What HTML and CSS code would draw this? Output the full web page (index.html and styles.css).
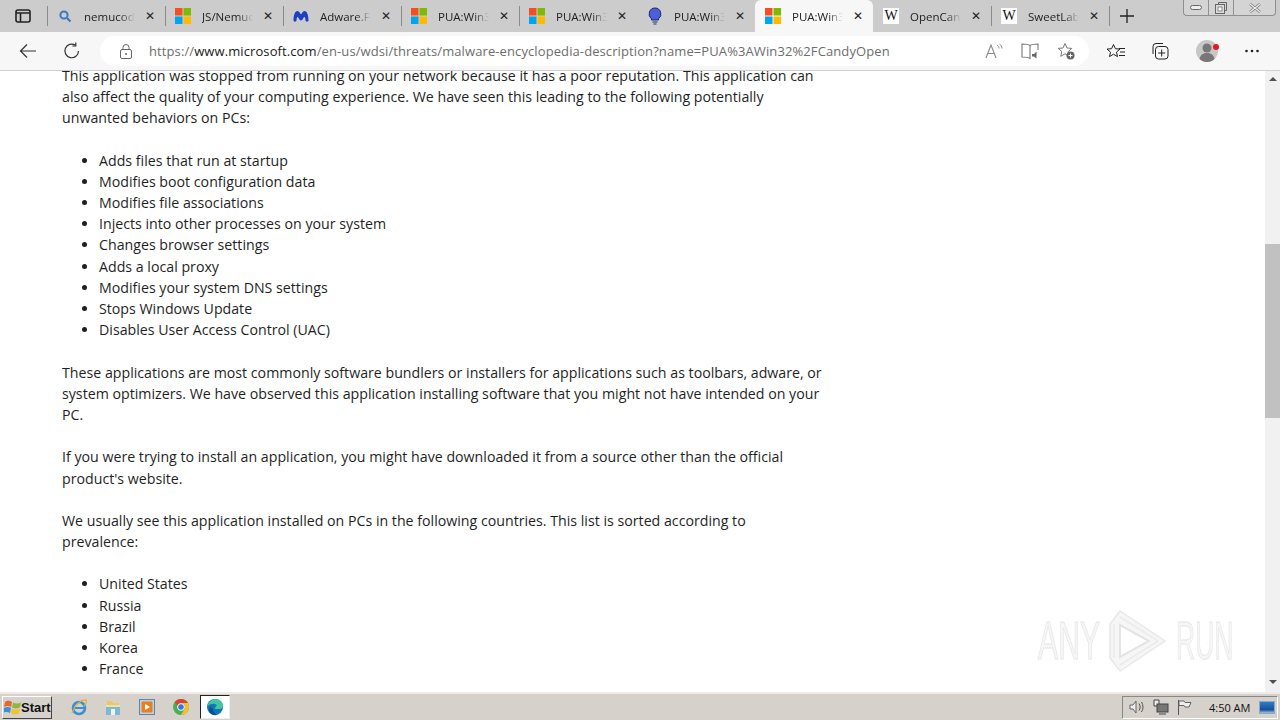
FILE: index.html
```html
<!DOCTYPE html>
<html lang="en">
<head>
    <meta charset="UTF-8">
    <title>PUA:Win32/CandyOpen</title>
    <link rel="stylesheet" href="styles.css">
</head>
<body>
    <div class="tabbar">
        <div class="tab-actions">
            <svg width="16" height="14" viewBox="0 0 16 14"><rect x="1" y="1" width="14" height="12" rx="2" fill="none" stroke="#222" stroke-width="1.6"/><path d="M1 4h14M5.5 4v9" stroke="#222" stroke-width="1.6" fill="none"/></svg>
        </div>
        <div class="tab sep">
            <svg class="fav" width="16" height="16" viewBox="0 0 16 16"><circle cx="7" cy="7" r="3.6" fill="none" stroke="#3a78c4" stroke-width="2"/><path d="M10 10l3.5 3.5" stroke="#3a78c4" stroke-width="2.2"/></svg>
            <span class="tab-title">nemucod</span><span class="tab-x">&#x2715;</span>
        </div>
        <div class="tab sep">
            <svg class="fav" width="16" height="16" viewBox="0 0 16 16"><rect width="7.5" height="7.5" fill="#f25022"/><rect x="8.5" width="7.5" height="7.5" fill="#7fba00"/><rect y="8.5" width="7.5" height="7.5" fill="#00a4ef"/><rect x="8.5" y="8.5" width="7.5" height="7.5" fill="#ffb900"/></svg>
            <span class="tab-title">JS/Nemucod</span><span class="tab-x">&#x2715;</span>
        </div>
        <div class="tab sep">
            <svg class="fav" width="16" height="16" viewBox="0 0 16 16"><path d="M.5 12.500C.5 7 2 3 4.500 3 6.500 3 7 5.500 8 6.500 9 5.500 9.500 3 11.500 3 14 3 15.500 7 15.500 12.500 15.500 14 12.500 14 12.500 12.500 12.500 10.500 12 9 11.300 9 10.500 9 10 12 8 12.500 6 12 5.500 9 4.700 9 4 9 3.500 10.500 3.500 12.500 3.500 14 .5 14 .5 12.500Z" fill="#1c3fc4"/></svg>
            <span class="tab-title">Adware.Full</span><span class="tab-x">&#x2715;</span>
        </div>
        <div class="tab sep">
            <svg class="fav" width="16" height="16" viewBox="0 0 16 16"><rect width="7.5" height="7.5" fill="#f25022"/><rect x="8.5" width="7.5" height="7.500" fill="#7fba00"/><rect y="8.5" width="7.5" height="7.5" fill="#00a4ef"/><rect x="8.5" y="8.5" width="7.5" height="7.5" fill="#ffb900"/></svg>
            <span class="tab-title">PUA:Win32</span><span class="tab-x">&#x2715;</span>
        </div>
        <div class="tab sep">
            <svg class="fav" width="16" height="16" viewBox="0 0 16 16"><rect width="7.5" height="7.5" fill="#f25022"/><rect x="8.5" width="7.5" height="7.5" fill="#7fba00"/><rect y="8.5" width="7.5" height="7.5" fill="#00a4ef"/><rect x="8.5" y="8.5" width="7.5" height="7.5" fill="#ffb900"/></svg>
            <span class="tab-title">PUA:Win32</span><span class="tab-x">&#x2715;</span>
        </div>
        <div class="tab">
            <svg class="fav" width="16" height="18" viewBox="0 0 16 18"><path d="M8 1a6 6 0 0 0-3.500 10.800V13h7v-1.200A6 6 0 0 0 8 1Z" fill="#4a5fd8" stroke="#1f2a6e"/><path d="M5.500 15h5M6.500 17h3" stroke="#1f2a6e" stroke-width="1.200"/></svg>
            <span class="tab-title">PUA:Win32</span><span class="tab-x">&#x2715;</span>
        </div>
        <div class="tab active">
            <svg class="fav" width="16" height="16" viewBox="0 0 16 16"><rect width="7.5" height="7.5" fill="#f25022"/><rect x="8.5" width="7.5" height="7.5" fill="#7fba00"/><rect y="8.5" width="7.5" height="7.5" fill="#00a4ef"/><rect x="8.5" y="8.5" width="7.5" height="7.5" fill="#ffb900"/></svg>
            <span class="tab-title">PUA:Win32</span><span class="tab-x">&#x2715;</span>
        </div>
        <div class="tab">
            <span class="fav wiki">W</span>
            <span class="tab-title">OpenCandy</span><span class="tab-x">&#x2715;</span>
        </div>
        <div class="tab sep">
            <span class="fav wiki">W</span>
            <span class="tab-title">SweetLabs</span><span class="tab-x">&#x2715;</span>
        </div>
        <div class="new-tab">
            <svg width="14" height="14" viewBox="0 0 14 14"><path d="M7 0v14M0 7h14" stroke="#222" stroke-width="1.300"/></svg>
        </div>
        <div class="win-buttons">
            <div class="win-btn min"><svg width="12" height="6" viewBox="0 0 12 6"><rect x="0.500" y="0.500" width="11" height="4" rx="2" fill="#eee" stroke="#666"/></svg></div>
            <div class="win-btn restore"><svg width="12" height="12" viewBox="0 0 12 12"><path d="M3.500 2.500v-2h8v8h-2" fill="none" stroke="#666"/><rect x="0.500" y="2.500" width="9" height="9" fill="#ddd" stroke="#666"/><rect x="3" y="5" width="4" height="4" fill="#fff" stroke="#888"/></svg></div>
            <div class="win-btn close"><svg width="14" height="10" viewBox="0 0 14 10"><path d="M2 1l10 8M12 1l-10 8" stroke="#777" stroke-width="2.600"/><path d="M2 1l10 8M12 1l-10 8" stroke="#eee" stroke-width="1.200"/></svg></div>
        </div>
    </div>

    <div class="toolbar">
        <svg class="back" width="18" height="16" viewBox="0 0 18 16"><path d="M17 8H1.500M8 1.500 1.500 8 8 14.500" fill="none" stroke="#333" stroke-width="1.200"/></svg>
        <svg class="reload" width="18" height="18" viewBox="0 0 18 18"><path d="M15.500 9A6.800 6.800 0 1 1 12.500 3.300" fill="none" stroke="#333" stroke-width="1.200"/><path d="M12.800 0.500v3.500h-3.500" fill="none" stroke="#333" stroke-width="1.200"/></svg>
        <div class="address">
            <svg class="lock" width="12" height="15" viewBox="0 0 12 15"><rect x="0.500" y="5.500" width="11" height="9" rx="1.500" fill="none" stroke="#666"/><path d="M3 5.500V3.500a3 3 0 0 1 6 0v2" fill="none" stroke="#666"/><circle cx="6" cy="10" r="1" fill="#666"/></svg>
            <span class="url">https://<b>www.microsoft.com</b>/en-us/wdsi/threats/malware-encyclopedia-description?name=PUA%3AWin32%2FCandyOpen</span>
            <svg class="addr-icon read" width="18" height="16" viewBox="0 0 18 16"><path d="M1 15 6 2l5 13M3 10.500h6" fill="none" stroke="#8a8a8a" stroke-width="1.100"/><path d="M12 2c1.500 1 2 2 2 3.500M14.500 1c1.500 1.200 2.500 2.500 2.500 4.500" fill="none" stroke="#8a8a8a"/></svg>
            <svg class="addr-icon book" width="19" height="17" viewBox="0 0 19 17"><path d="M9 2.500C7 1 4 1 1 1v13c3 0 6 0 8 1.500V2.500ZM9 2.500C11 1 14 1 17 1v6" fill="none" stroke="#777" stroke-width="1.100"/><path d="M11 11h2l2.500-2.500v7L13 13.500h-2Z" fill="#666"/></svg>
            <svg class="addr-icon fav-add" width="18" height="18" viewBox="0 0 18 18"><path d="M8 1.500l2 4.500 4.800.4-3.600 3.200 1 4.700L8 11.800l-4.200 2.500 1-4.700L1.200 6.400 6 6Z" fill="none" stroke="#777"/><circle cx="13.500" cy="13.500" r="4" fill="#666"/><path d="M13.500 11.500v4M11.500 13.500h4" stroke="#fff"/></svg>
        </div>
        <div class="tools">
            <svg width="20" height="17" viewBox="0 0 20 17"><path d="M7.500 1.500l1.900 4.200 4.600.4-3.500 3 1 4.500-4-2.400-4 2.400 1-4.500-3.500-3 4.600-.4Z" fill="none" stroke="#222"/><path d="M13 5.500h6M14 9h5M13 12.500h6" stroke="#222"/></svg>
            <svg width="18" height="18" viewBox="0 0 18 18"><path d="M2 12V4.500A3 3 0 0 1 5 1.500h7" fill="none" stroke="#222"/><rect x="4.500" y="4.500" width="12.500" height="12.500" rx="3" fill="none" stroke="#222"/><path d="M10.700 7.500v7M7.200 11h7" stroke="#222"/></svg>
            <svg class="avatar" width="24" height="24" viewBox="0 0 24 24"><circle cx="11" cy="12" r="11" fill="#c9c7c5"/><circle cx="11" cy="9" r="4.500" fill="#777"/><path d="M3.500 20c1-4.500 4-6 7.500-6s6.500 1.500 7.500 6c-2 2-4.500 3-7.500 3s-5.500-1-7.500-3Z" fill="#777"/><circle cx="20" cy="8" r="3" fill="#e01b24"/></svg>
            <svg class="more" width="16" height="4" viewBox="0 0 16 4"><circle cx="2.500" cy="2" r="1.300" fill="#222"/><circle cx="8" cy="2" r="1.300" fill="#222"/><circle cx="13.500" cy="2" r="1.300" fill="#222"/></svg>
        </div>
    </div>

    <div class="viewport">
        <div class="page">
            <p>This application was stopped from running on your network because it has a poor reputation. This application can also affect the quality of your computing experience. We have seen this leading to the following potentially unwanted behaviors on PCs:</p>
            <ul>
                <li>Adds files that run at startup</li>
                <li>Modifies boot configuration data</li>
                <li>Modifies file associations</li>
                <li>Injects into other processes on your system</li>
                <li>Changes browser settings</li>
                <li>Adds a local proxy</li>
                <li>Modifies your system DNS settings</li>
                <li>Stops Windows Update</li>
                <li>Disables User Access Control (UAC)</li>
            </ul>
            <p>These applications are most commonly software bundlers or installers for applications such as toolbars, adware, or system optimizers. We have observed this application installing software that you might not have intended on your PC.</p>
            <p>If you were trying to install an application, you might have downloaded it from a source other than the official product's website.</p>
            <p>We usually see this application installed on PCs in the following countries. This list is sorted according to prevalence:</p>
            <ul>
                <li>United States</li>
                <li>Russia</li>
                <li>Brazil</li>
                <li>Korea</li>
                <li>France</li>
            </ul>
        </div>
        <div class="scrollbar">
            <div class="arrow up"></div>
            <div class="track"><div class="thumb"></div></div>
            <div class="arrow down"></div>
        </div>
        <div class="watermark">
            <span class="wm-any">ANY</span>
            <svg width="58" height="62" viewBox="0 0 58 62"><path d="M2 14 12 1 57 31 12 61 2 48Z" fill="#f6f6f6" stroke="#e8e8e8" stroke-width="1.500"/><path d="M12 15 41 31 12 47Z" fill="#fff" stroke="#e4e4e4" stroke-width="2"/><path d="M6 14V48M12 7 50 31 12 55" fill="none" stroke="#ebebeb" stroke-width="1.500"/></svg>
            <span class="wm-run">RUN</span>
        </div>
    </div>

    <div class="taskbar">
        <div class="start">
            <svg class="flag" width="18" height="17" viewBox="0 0 18 17"><path d="M1 3c3-2 5-1 7 0L7 8C5 7 3 6.500 0 8Z" fill="#e8672a"/><path d="M9 3.500c2 1 5 1.500 8 0L16 8.500c-3 1.500-6 1-8 0Z" fill="#8cb83c"/><path d="M0 9c3-1.500 5-1 7 0L6 14c-2-1-4-1.500-7 0Z" fill="#3d8fd8"/><path d="M8 9.500c2 1 5 1.500 8 0L15 14.500c-3 1.500-6 1-8 0Z" fill="#f2c230"/></svg>
            <span>Start</span>
        </div>
        <div class="task-icons">
            <div class="task-icon"><svg width="18" height="18" viewBox="0 0 18 18"><circle cx="9" cy="10" r="6" fill="none" stroke="#3b8fd4" stroke-width="2.600"/><path d="M4 10h10" stroke="#3b8fd4" stroke-width="2"/><path d="M2 15C5 7 11 1 16 2c1 1 0 4-2 6" fill="none" stroke="#e0b040" stroke-width="1.300"/></svg></div>
            <div class="task-icon"><svg width="16" height="17" viewBox="0 0 16 17"><path d="M2 2h5l1 2h6v5H2Z" fill="#e8c868"/><path d="M1 6h14v10H1Z" fill="#7fb8d4"/><path d="M1 6h14v2H1Z" fill="#f0e2a0"/><rect x="6" y="10" width="4" height="6" fill="#eef4f6"/></svg></div>
            <div class="task-icon"><svg width="16" height="16" viewBox="0 0 16 16"><rect x="0.500" y="0.500" width="15" height="15" fill="#bcd0e4" stroke="#5a86b0"/><rect x="2.500" y="2.500" width="11" height="11" rx="1" fill="#e8801e"/><path d="M6 5l5 3-5 3Z" fill="#fff"/></svg></div>
            <div class="task-icon"><svg width="16" height="16" viewBox="0 0 16 16"><circle cx="8" cy="8" r="8" fill="#4caf50"/><path d="M8 0a8 8 0 0 1 6.900 4H8a4 4 0 0 0-3.800 2.700L1.800 3A8 8 0 0 1 8 0Z" fill="#e0402f"/><path d="M14.900 4A8 8 0 0 1 8 16l3.400-6A4 4 0 0 0 8 4Z" fill="#f6c02c"/><circle cx="8" cy="8" r="3.400" fill="#3a78d8" stroke="#fff"/></svg></div>
            <div class="task-icon running"><svg width="18" height="18" viewBox="0 0 18 18"><circle cx="9" cy="9" r="8" fill="#0f77b8"/><path d="M1.500 8C3 3 7 1 10 1c4 0 7 3 7 7 0 2-1.500 3-3.500 3H9c0-2 1-3 2-3.500C9 5 5 5.500 1.500 8Z" fill="#46c6a0"/><path d="M7 11c0 3 2 5.500 5 5.500-3 1.500-7 .5-8.500-2.500C2.500 12 3 9.500 5 8c-.5 1-.5 2 2 3Z" fill="#0a4f8f"/></svg></div>
        </div>
        <div class="tray">
            <svg width="16" height="14" viewBox="0 0 16 14"><path d="M1 5h3l3-4v12l-3-4H1Z" fill="#eee" stroke="#666"/><path d="M10 3.500c1.500 2 1.500 5 0 7M12.500 2c2 3 2 7 0 10" fill="none" stroke="#555"/></svg>
            <svg width="16" height="16" viewBox="0 0 16 16"><path d="M1 1h5v6H1Z" fill="#eee" stroke="#444"/><rect x="4" y="5" width="11" height="8" fill="#777" stroke="#444"/><path d="M6 15h7" stroke="#444"/></svg>
            <svg width="15" height="15" viewBox="0 0 15 15"><path d="M1.500 0v15" stroke="#555"/><path d="M2 1h5l1 1.500h6L12 7H8L7 5.500H2Z" fill="#eee" stroke="#666"/></svg>
            <span class="clock">4:50 AM</span>
            <div class="show-desktop"></div>
        </div>
    </div>
</body>
</html>
```
FILE: styles.css
```css
* {
    box-sizing: border-box;
}
html, body {
    height: 100%;
}
body {
    margin: 0;
    display: flex;
    flex-direction: column;
    overflow: hidden;
    font-family: "Open Sans", "Noto Sans", sans-serif;
    color: #222;
    background: #fff;
}

/* tab strip */
.tabbar {
    height: 32px;
    background: #cccccc;
    display: flex;
    align-items: center;
    flex-shrink: 0;
}
.tab-actions {
    width: 47px;
    display: flex;
    justify-content: center;
    padding-right: 1px;
}
.tab {
    width: 118px;
    height: 32px;
    display: flex;
    align-items: center;
    padding: 0 8px 0 10px;
}
.tab.sep {
    background-image: linear-gradient(#8a8a8a, #8a8a8a);
    background-size: 1px 20px;
    background-position: 0 6px;
    background-repeat: no-repeat;
}
.tab.active {
    background: #f7f7f7;
    border-radius: 6px 6px 0 0;
}
.fav {
    flex-shrink: 0;
    width: 16px;
}
.wiki {
    height: 16px;
    background: #fff;
    color: #111;
    font-family: "Liberation Serif", serif;
    font-size: 14px;
    line-height: 16px;
    text-align: center;
}
.tab-title {
    flex: 1;
    min-width: 0;
    margin: 0 8px 0 11px;
    font-size: 11.5px;
    white-space: nowrap;
    overflow: hidden;
    -webkit-mask-image: linear-gradient(to right, #000 70%, transparent 100%);
    mask-image: linear-gradient(to right, #000 70%, transparent 100%);
}
.tab-x {
    width: 14px;
    flex-shrink: 0;
    font-size: 12px;
    font-weight: 700;
    font-family: "DejaVu Sans", sans-serif;
    text-align: center;
    color: #222;
}
.new-tab {
    width: 36px;
    height: 32px;
    display: flex;
    align-items: center;
    justify-content: center;
    background-image: linear-gradient(#8a8a8a, #8a8a8a);
    background-size: 1px 20px;
    background-position: 0 6px;
    background-repeat: no-repeat;
}
.win-buttons {
    margin-left: auto;
    margin-right: 4px;
    align-self: flex-start;
    height: 16px;
    display: flex;
    border: 1px solid #8f8f8f;
    border-top: 0;
    border-radius: 0 0 4px 4px;
    background: #d4d4d4;
}
.win-btn {
    display: flex;
    align-items: center;
    justify-content: center;
    border-left: 1px solid #8f8f8f;
}
.min {
    width: 24px;
    border-left: 0;
}
.restore {
    width: 25px;
}
.close {
    width: 42px;
}

/* address row */
.toolbar {
    height: 39px;
    background: #f7f7f7;
    border-bottom: 1px solid #d0d0d0;
    display: flex;
    align-items: center;
    flex-shrink: 0;
}
.back {
    margin-left: 19px;
}
.reload {
    margin-left: 26px;
}
.address {
    margin-left: 19px;
    width: 989px;
    height: 30px;
    background: #fff;
    border-radius: 15px;
    display: flex;
    align-items: center;
}
.lock {
    margin-left: 20px;
    flex-shrink: 0;
}
.url {
    margin-left: 17px;
    width: 778px;
    font-size: 13px;
    letter-spacing: 0.1px;
    color: #6d6d6d;
    white-space: nowrap;
}
.url b {
    font-weight: 400;
    color: #1a1a1a;
}
.addr-icon {
    flex-shrink: 0;
}
.read {
    margin-left: 58px;
}
.book {
    margin-left: 18px;
}
.fav-add {
    margin-left: 17px;
}
.tools {
    display: flex;
    align-items: center;
    margin-left: 17px;
    gap: 25px;
}
.tools .avatar {
    margin-left: 2px;
}
.tools .more {
    margin-left: -1px;
}

/* page content */
.viewport {
    flex: 1;
    min-height: 0;
    display: flex;
    position: relative;
    overflow: hidden;
}
.page {
    flex: 1;
    padding: 0 0 0 62px;
    margin-top: -6px;
    font-size: 14.2px;
    line-height: 21.18px;
    color: #1f1f1f;
}
.page p {
    width: 762px;
    margin: 0 0 21.18px;
}
.page ul {
    margin: 0 0 21.18px;
    padding-left: 37px;
}
.scrollbar {
    width: 15px;
    background: #f1f1f1;
    display: flex;
    flex-direction: column;
    flex-shrink: 0;
}
.arrow {
    height: 15px;
    display: flex;
    align-items: center;
    justify-content: center;
}
.arrow::before {
    content: "";
    border-left: 4px solid transparent;
    border-right: 4px solid transparent;
}
.up::before {
    border-bottom: 4px solid #505050;
}
.down {
    height: 17px;
    padding-bottom: 3px;
}
.down::before {
    border-top: 4px solid #505050;
}
.track {
    flex: 1;
    padding-top: 158px;
}
.thumb {
    height: 174px;
    background: #c1c1c1;
}
.watermark {
    position: absolute;
    left: 1038px;
    top: 539px;
    display: flex;
    align-items: center;
    font-family: "Liberation Sans", sans-serif;
    font-size: 53px;
    line-height: 62px;
    color: #f6f6f6;
    -webkit-text-stroke: 1px #e6e6e6;
}
.watermark span {
    display: block;
    transform-origin: left center;
}
.wm-any {
    width: 70px;
    transform: scaleX(0.57);
}
.wm-run {
    width: 57px;
    margin-left: 10px;
    transform: scaleX(0.5);
}

/* windows taskbar */
.taskbar {
    height: 28px;
    background: #d6d2cb;
    border-top: 2px solid #efece7;
    display: flex;
    align-items: center;
    flex-shrink: 0;
}
.start {
    margin-left: 2px;
    width: 50px;
    height: 23px;
    display: flex;
    align-items: center;
    padding-left: 1px;
    border: 1px solid;
    border-color: #fff #444 #444 #fff;
    font-family: "Liberation Sans", sans-serif;
    font-weight: 700;
    font-size: 13px;
    color: #111;
}
.flag {
    margin-right: -1px;
    flex-shrink: 0;
}
.task-icons {
    display: flex;
    align-items: center;
    margin-left: 12px;
    gap: 4px;
}
.task-icon {
    width: 30px;
    height: 24px;
    display: flex;
    align-items: center;
    justify-content: center;
}
.task-icon.running {
    background: #fff;
    border: 1px solid;
    border-color: #222 #eee #eee #222;
}
.tray {
    margin-left: auto;
    margin-right: 2px;
    width: 156px;
    height: 23px;
    display: flex;
    align-items: center;
    gap: 8px;
    padding-left: 6px;
    border: 1px solid;
    border-color: #888 #fff #fff #888;
}
.clock {
    margin-left: 9px;
    font-size: 11px;
    color: #111;
    white-space: nowrap;
}
.show-desktop {
    width: 16px;
    height: 13px;
    margin-left: 1px;
    background: linear-gradient(#2a7fd0, #1b4f92 70%, #9cc3e6);
    border: 1px solid #8fa8c0;
}
```
